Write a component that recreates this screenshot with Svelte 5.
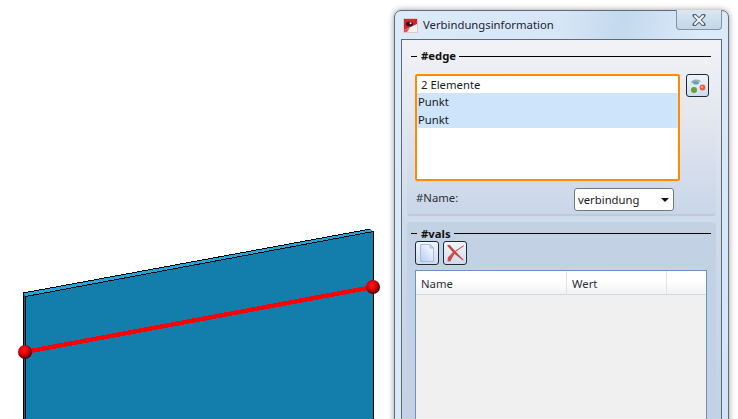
<script>
  const rows = ['Punkt', 'Punkt'];
</script>

<div class="page">
  <svg class="scene" width="394" height="419" viewBox="0 0 394 419">
    <defs>
      <radialGradient id="ball" cx="0.42" cy="0.38" r="0.62">
        <stop offset="0" stop-color="#ff1a1a" />
        <stop offset="0.5" stop-color="#e00008" />
        <stop offset="1" stop-color="#4a0004" />
      </radialGradient>
    </defs>
    <g shape-rendering="crispEdges">
      <polygon points="22.5,419 22.5,293 370.5,229 373.5,231.5 373.5,419" fill="#137dab" />
      <polygon points="22.5,293 370.5,229 373.5,231.5 25.5,296.5" fill="#1ea6dc" />
      <polygon points="22.5,293 25.5,296.5 25.5,419 22.5,419" fill="#0d5f86" />
      <polyline points="23,419 23,293 370.5,229" fill="none" stroke="#000" stroke-width="1" />
      <polyline points="25.5,419 25.5,296.5 373.5,231.5 373.5,419" fill="none" stroke="#000" stroke-width="1" />
      <line x1="25" y1="352" x2="373" y2="287" stroke="#ff0000" stroke-width="4.4" />
    </g>
    <circle cx="25" cy="352" r="7" fill="url(#ball)" />
    <circle cx="373" cy="287" r="7" fill="url(#ball)" />
  </svg>

  <section class="window">
    <header class="titlebar">
      <svg class="appicon" width="15" height="15" viewBox="0 0 15 15">
        <rect width="15" height="15" fill="#f0d6d6" />
        <rect x="0.5" y="0.5" width="14" height="14" fill="#d4252f" stroke="#e9c4c4" />
        <polygon points="1,14 1,12 14,6 14,14" fill="#fbf0f0" />
        <polygon points="1,14 1,12 7,9.5 4,14" fill="#e0505a" />
        <ellipse cx="6.5" cy="6" rx="3.6" ry="2.3" fill="#2a1418" />
        <circle cx="7.6" cy="5.2" r="1" fill="#e8e8e8" />
      </svg>
      <span class="title">Verbindungsinformation</span>
      <button class="close" aria-label="Schließen">
        <svg width="14" height="12" viewBox="0 0 14 12">
          <path d="M2.5 1.5 L11.5 10.5 M11.5 1.5 L2.5 10.5" stroke="#5a6470" stroke-width="4" stroke-linecap="round" />
          <path d="M3 2 L11 10 M11 2 L3 10" stroke="#f4f6f8" stroke-width="2" stroke-linecap="round" />
        </svg>
      </button>
    </header>

    <div class="client">
      <div class="panel first">
        <div class="legend edge"><i class="stub"></i><b>#edge</b><i class="rule"></i></div>
        <div class="listrow">
          <div class="list">
            <div class="item head">2 Elemente</div>
            {#each rows as row}
              <div class="item sel">{row}</div>
            {/each}
          </div>
          <button class="tool small" aria-label="Anzeigen">
            <svg width="20" height="20" viewBox="0 0 20 20">
              <path d="M3.5 7 C5 3.5 11 3.5 12.5 6" fill="none" stroke="#9aa6b0" stroke-width="1.3" />
              <ellipse cx="8" cy="6.8" rx="3" ry="1.8" fill="#5aa4aa" />
              <circle cx="6" cy="14" r="3" fill="#65a032" />
              <circle cx="14.5" cy="11.5" r="2.9" fill="#ea5a46" />
              <circle cx="14" cy="11" r="1.1" fill="#f8b0a4" />
            </svg>
          </button>
        </div>
        <div class="namerow">
          <label for="name">#Name:</label>
          <div class="select" id="name">
            <span>verbindung</span>
            <i class="caret"></i>
          </div>
        </div>
      </div>

      <div class="panel second">
        <div class="legend vals"><i class="stub"></i><b>#vals</b><i class="rule"></i></div>
        <div class="toolbar">
          <button class="tool" aria-label="Neu">
            <svg width="18" height="20" viewBox="0 0 18 20">
              <defs>
                <linearGradient id="doc" x1="1" y1="0" x2="0" y2="1">
                  <stop offset="0" stop-color="#ffffff" />
                  <stop offset="1" stop-color="#b4ccf2" />
                </linearGradient>
              </defs>
              <path d="M2.5 1.5 H12 L15.5 5 V18.5 H2.5 Z" fill="url(#doc)" stroke="#a8bcdc" />
              <path d="M12 1.5 V5 H15.5 Z" fill="#cfdcf2" stroke="#a8bcdc" />
            </svg>
          </button>
          <button class="tool" aria-label="Löschen">
            <svg width="20" height="20" viewBox="0 0 20 20">
              <path d="M2 2.5 L4.5 1.8 L10.6 8.6 L18.6 16.8 L18 17.6 L9 10.4 Z" fill="#c4473f" />
              <path d="M18.6 2.2 L19 3 L11 8.6 L7.4 14.4 L5.4 18.4 L2.6 18.2 L2.8 14.6 L7.6 9.4 Z" fill="#cf4c44" />
            </svg>
          </button>
        </div>
        <div class="table">
          <div class="thead">
            <span class="th c1">Name</span>
            <span class="th c2">Wert</span>
            <span class="th c3"></span>
          </div>
          <div class="tbody"></div>
        </div>
      </div>
    </div>
  </section>
</div>

<style>
  :global(body) {
    margin: 0;
    background: #fff;
  }
  .page {
    position: relative;
    width: 738px;
    height: 419px;
    overflow: hidden;
    background: #fff;
    font-family: "Noto Sans", "Open Sans", sans-serif;
    font-size: 11.3px;
    color: #1a1a1a;
  }
  .scene {
    position: absolute;
    left: 0;
    top: 0;
  }
  .window {
    position: absolute;
    left: 394px;
    top: 10px;
    width: 335px;
    height: 480px;
    box-sizing: border-box;
    display: flex;
    flex-direction: column;
    padding: 0 6px;
    border: 1px solid #5f6b78;
    border-radius: 7px 7px 0 0;
    background: linear-gradient(100deg, #dcebf9 0%, #d6e6f6 40%, #c4d9ee 55%, #dcebf9 75%, #d2e3f4 100%);
    box-shadow: 0 0 6px rgba(0, 0, 0, 0.4);
  }
  .titlebar {
    height: 28px;
    display: flex;
    align-items: center;
    flex: none;
  }
  .appicon {
    margin: 0 5px 0 2px;
    flex: none;
  }
  .title {
    flex: 1;
    padding-bottom: 2px;
    color: #1c2433;
    white-space: nowrap;
  }
  .close {
    align-self: flex-start;
    width: 46px;
    height: 20px;
    margin: -1px 0 0;
    padding: 0;
    display: flex;
    align-items: center;
    justify-content: center;
    border: 1px solid #8492a3;
    border-top: 0;
    border-radius: 0 0 4px 4px;
    background: linear-gradient(#dbe7f3, #c4d6e8);
  }
  .client {
    flex: 1;
    box-sizing: border-box;
    display: flex;
    flex-direction: column;
    gap: 5px;
    padding: 4px 5px 0;
    border: 1px solid #5e6a78;
    border-bottom: 0;
    background: linear-gradient(#f0f2f6 0, #cfdbeb 180px, #bfcfe4 100%);
  }
  .panel {
    box-sizing: border-box;
    border-radius: 3px;
    padding: 0 5px 0 4px;
  }
  .first {
    height: 172px;
    background: linear-gradient(#f1f2f5, #e4e8ef 40%, #c9d6e8);
    border-bottom: 2px solid #bccadd;
  }
  .second {
    flex: 1;
    background: #c3d1e5;
    border-top: 1px solid #d1dded;
  }
  .legend {
    display: flex;
    align-items: center;
    color: #111;
  }
  .legend b {
    font-weight: 700;
    line-height: 14px;
  }
  .stub {
    width: 6px;
    height: 1px;
    margin-right: 4px;
    background: #000;
  }
  .rule {
    flex: 1;
    height: 1px;
    margin-left: 3px;
    background: #000;
  }
  .edge {
    margin-top: 5px;
  }
  .vals {
    margin-top: 3px;
  }
  .vals b {
    padding-top: 2px;
  }
  .listrow {
    display: flex;
    align-items: flex-start;
    gap: 6px;
    margin: 11px 0 0 4px;
  }
  .list {
    box-sizing: border-box;
    width: 265px;
    height: 107px;
    border: 2px solid #ff8c00;
    border-radius: 2px;
    background: #fff;
  }
  .item {
    height: 17.5px;
    line-height: 17px;
    padding-left: 1px;
    color: #1a1a1a;
  }
  .item.head {
    height: 17px;
    padding-left: 4px;
    white-space: nowrap;
  }
  .item.sel {
    background: #cde4fb;
  }
  .tool {
    width: 24px;
    height: 24px;
    padding: 0;
    flex: none;
    display: flex;
    align-items: center;
    justify-content: center;
    border: 1px solid #1f2a38;
    border-radius: 3px;
    background: linear-gradient(#f1f5fa, #cfdcec);
  }
  .tool.small {
    width: 23px;
    height: 23px;
  }
  .namerow {
    display: flex;
    align-items: center;
    justify-content: space-between;
    margin: 7px 37px 0 5px;
  }
  .namerow label {
    position: relative;
    bottom: 2px;
    color: #2a2f38;
  }
  .select {
    box-sizing: border-box;
    width: 100px;
    height: 23px;
    display: flex;
    align-items: center;
    justify-content: space-between;
    padding: 0 4px 0 3px;
    border: 1px solid #6e7a88;
    border-radius: 3px;
    background: #fff;
  }
  .caret {
    width: 0;
    height: 0;
    border-left: 4px solid transparent;
    border-right: 4px solid transparent;
    border-top: 4px solid #111;
  }
  .toolbar {
    display: flex;
    gap: 4px;
    margin: 0 0 5px 4px;
  }
  .table {
    box-sizing: border-box;
    width: 292px;
    height: 220px;
    margin-left: 4px;
    border: 1px solid #6f92ba;
    background: #f0f0f0;
  }
  .thead {
    display: flex;
    height: 23px;
    background: linear-gradient(#fff 0, #fff 40%, #f2f3f5 100%);
    border-bottom: 1px solid #d6d8da;
  }
  .th {
    box-sizing: border-box;
    line-height: 25px;
    padding-left: 5px;
    color: #2a2f38;
    border-right: 1px solid #e2e3e5;
  }
  .c1 {
    width: 151px;
  }
  .c2 {
    width: 100px;
  }
  .c3 {
    flex: 1;
    border-right: 0;
  }
</style>
